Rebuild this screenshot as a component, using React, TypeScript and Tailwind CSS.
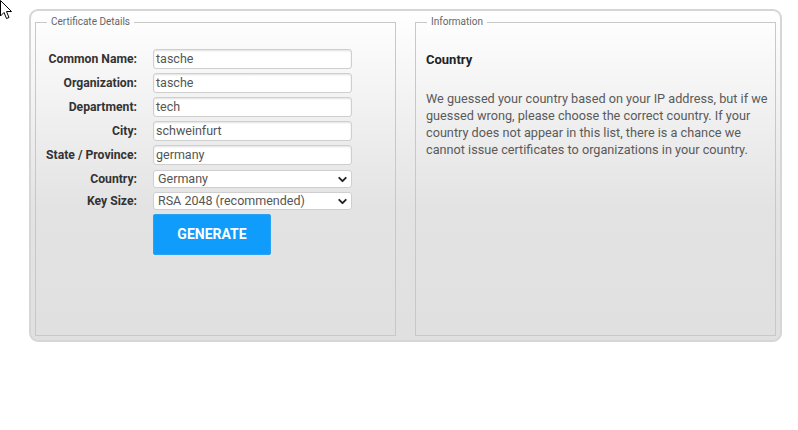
import { ChevronDown } from 'lucide-react';

const fields = [
  { label: 'Common Name:', value: 'tasche' },
  { label: 'Organization:', value: 'tasche' },
  { label: 'Department:', value: 'tech' },
  { label: 'City:', value: 'schweinfurt' },
  { label: 'State / Province:', value: 'germany' },
];

const selects = [
  { label: 'Country:', value: 'Germany' },
  { label: 'Key Size:', value: 'RSA 2048 (recommended)' },
];

const Cursor = () => (
  <svg className="absolute left-0 top-0" width="13" height="20" viewBox="0 0 13 20">
    <path d="M0.5 0.5 L0.5 16 L4 12.5 L6.5 18.5 L9 17.5 L6.5 11.5 L11.5 11.5 Z" fill="#fff" stroke="#000" strokeWidth="1" />
  </svg>
);

export default function App() {
  return (
    <div className="relative h-[430px] w-[798px] bg-white font-['Roboto',sans-serif]">
      <Cursor />
      <div className="ml-[29px] pt-[9px]">
        <div className="flex h-[333px] w-[753px] gap-[19px] rounded-[9px] border-2 border-[#d6d6d6] bg-gradient-to-b from-white via-[#e3e3e3] via-60% to-[#e0e0e0] px-[4px] pb-[4px] pt-[5px]">
          <fieldset className="w-[361px] border border-[#c8c8c8] pb-0">
            <legend className="ml-[11px] px-[4px] text-[10px] leading-[12px] text-[#666]">Certificate Details</legend>
            <div className="flex flex-col pt-[21px]">
              {fields.map((f) => (
                <div key={f.label} className="mb-[4px] flex h-[20px] items-center">
                  <div className="w-[101px] text-right text-[12.2px] font-bold text-[#333]">{f.label}</div>
                  <div className="ml-[16px] flex h-[20px] w-[199px] items-center rounded-[3px] border border-[#cfcfcf] bg-white px-[2px] text-[12.5px] text-[#555] shadow-[inset_0_1px_2px_rgba(0,0,0,0.12)]">
                    {f.value}
                  </div>
                </div>
              ))}
              <div className="mt-[1px]" />
              {selects.map((s) => (
                <div key={s.label} className="mb-[4px] flex h-[18px] items-center">
                  <div className="w-[101px] text-right text-[12.2px] font-bold text-[#333]">{s.label}</div>
                  <div className="ml-[16px] flex h-[18px] w-[199px] items-center justify-between rounded-[3px] border border-[#cfcfcf] bg-white pl-[4px] pr-[2px] text-[12.5px] text-[#555]">
                    <span>{s.value}</span>
                    <ChevronDown className="h-[13px] w-[13px] text-[#222]" strokeWidth={3.5} />
                  </div>
                </div>
              ))}
              <div className="ml-[117px] flex">
                <button className="flex h-[41px] w-[118px] items-center justify-center rounded-[2px] border border-[#2aa2f3] bg-[#0f9cfb] text-[14px] font-bold text-white">
                  GENERATE
                </button>
              </div>
            </div>
          </fieldset>
          <fieldset className="w-[361px] border border-[#c8c8c8] pl-[10px] pr-[2px]">
            <legend className="ml-[1px] px-[4px] text-[10px] leading-[12px] text-[#666]">Information</legend>
            <h3 className="mt-[22px] text-[13px] font-bold text-[#222]">Country</h3>
            <p className="mt-[20px] text-[12.7px] leading-[17px] text-[#5a5a5a]">
              We guessed your country based on your IP address, but if we guessed wrong, please choose the correct country. If your country does not appear in this list, there is a chance we cannot issue certificates to organizations in your country.
            </p>
          </fieldset>
        </div>
      </div>
    </div>
  );
}
